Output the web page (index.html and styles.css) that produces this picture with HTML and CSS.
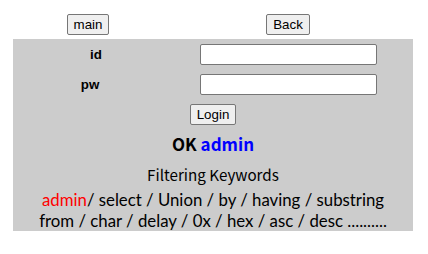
FILE: index.html
```html
<!doctype html>
<html>
<head>
  <meta charset="utf-8">
  <title>Login</title>
  <link rel="stylesheet" href="styles.css">
</head>
<body>
  <div id="wrap">
    <div id="top">
      <button type="button" class="btn">main</button>
      <button type="button" class="btn">Back</button>
    </div>

    <div id="panel">
      <form id="login">
        <div class="rows">
          <label class="lbl lbl_id" for="uid">id</label>
          <input class="field" id="uid" type="text">
          <label class="lbl lbl_pw" for="upw">pw</label>
          <input class="field" id="upw" type="password">
        </div>
        <div class="submit">
          <button type="submit" class="btn">Login</button>
        </div>
      </form>

      <p class="ok">OK <span class="user">admin</span></p>
      <p class="title">Filtering Keywords</p>
      <p class="keywords">
        <span class="hit">admin</span>/ select / Union / by / having / substring<br>
        from / char / delay / 0x / hex / asc / desc ..........
      </p>
    </div>
  </div>
</body>
</html>
```

FILE: styles.css
```css
* {
  margin: 0; padding: 0;
}
body {
  background: #fff;
  color: #000;
  font-family: 'Noto Sans CJK KR', 'Noto Sans', sans-serif;
}
#wrap {
  width: 400px;
  margin-left: 13px;
}
.btn {
  font-family: 'Liberation Sans', Arial, sans-serif;
  font-size: 13.33px;
  height: 21px;
  padding: 0 6px;
  border: 1px solid #767676;
  border-radius: 2px;
  background: #efefef;
  color: #000;
}
#top {
  display: grid;
  grid-template-columns: 150px 150px;
  column-gap: 50px;
  justify-items: center;
  padding: 14px 0 4px;
}
#panel {
  background: #cccccc;
  padding: 5px 0 0;
  text-align: center;
}
#login .rows {
  display: grid;
  grid-template-columns: 160px 177px;
  column-gap: 27px;
  row-gap: 9px;
  align-items: center;
}
.lbl {
  font-family: 'Liberation Sans', Arial, sans-serif;
  font-weight: bold;
  font-size: 13.33px;
  text-align: center;
}
.lbl_id {
  padding-left: 6px;
}
.lbl_pw {
  padding-right: 6px;
}
.field {
  box-sizing: border-box;
  width: 177px;
  height: 21px;
  padding: 1px 2px;
  border: 1px solid #767676;
  border-radius: 2px;
  background: #fff;
}
.submit {
  margin-top: 9px;
  height: 21px;
}
.submit .btn {
  display: block;
  margin: 0 auto;
}
.ok {
  font-size: 17px;
  font-weight: bold;
  line-height: 22px;
  margin-top: 8px;
}
.user {
  color: #0000ff;
}
.title {
  font-size: 15.2px;
  line-height: 22px;
  margin-top: 8px;
}
.keywords {
  font-family: Lato, 'Noto Sans CJK KR', sans-serif;
  font-size: 16.8px;
  line-height: 21px;
  margin-top: 4px;
}
.hit {
  color: #ff0000;
}
```
